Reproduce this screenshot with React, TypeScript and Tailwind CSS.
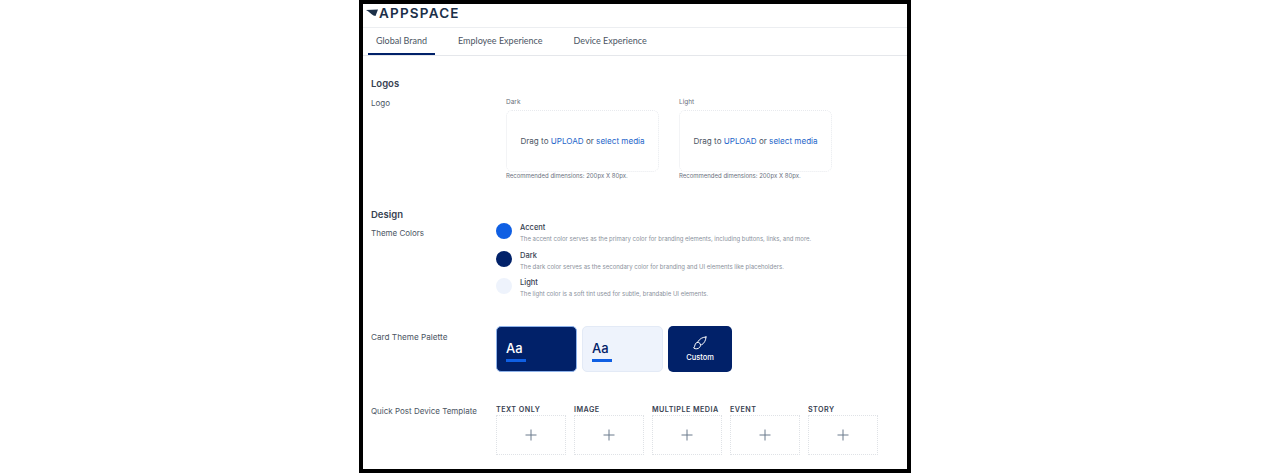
import React from 'react'

const uploadBoxes = ['Dark', 'Light']
const colors = [
  { name: 'Accent', swatch: 'bg-[#0f5fe3]', text: 'The accent color serves as the primary color for branding elements, including buttons, links, and more.' },
  { name: 'Dark', swatch: 'bg-[#012169]', text: 'The dark color serves as the secondary color for branding and UI elements like placeholders.' },
  { name: 'Light', swatch: 'bg-[#eef3fc]', text: 'The light color is a soft tint used for subtle, brandable UI elements.' },
]
const templates = ['TEXT ONLY', 'IMAGE', 'MULTIPLE MEDIA', 'EVENT', 'STORY']

function UploadBox({ label }: { label: string }) {
  return (
    <div className="w-[153px]">
      <p className="h-[15px] text-[6.5px] leading-[14px] text-[#6b7280]">{label}</p>
      <div className="flex h-[62px] items-center justify-center rounded-md border border-dotted border-[#e8eaee] text-[8.1px] text-[#4b5563]">
        <span>
          Drag to <span className="text-[#2465c9]">UPLOAD</span> or <span className="text-[#2465c9]">select media</span>
        </span>
      </div>
      <p className="text-[6px] leading-[8px] text-[#6b7280]">Recommended dimensions: 200px X 80px.</p>
    </div>
  )
}

export default function App() {
  return (
    <div className="h-[473px] w-[1270px] bg-white font-['Inter',sans-serif]">
      <div className="ml-[359px] h-[473px] w-[552px] overflow-hidden border-4 border-black bg-white">
        <div className="flex h-[24px] items-start border-b border-[#eceef1] pl-[3px] pt-[2px]">
          <svg width="13" height="8" viewBox="0 0 13 8" className="mt-[3px] shrink-0">
            <path d="M0 1 L12 0.500 L9.500 7 L7.500 6.500 C5 5 3 2.500 0 1 Z" fill="#1b2f48" />
          </svg>
          <span className="text-[13.5px] font-semibold leading-[14px] tracking-[1.2px] text-[#1b2f48]">APPSPACE</span>
        </div>

        <div className="flex h-[28px] border-b border-[#e5e7eb] pl-[5px] font-['Lato',sans-serif] text-[9px] text-[#4b5563]">
          <div className="flex h-[27px] w-[67px] items-center justify-center border-b-2 border-[#012169]">Global Brand</div>
          <div className="ml-[23px] flex h-[26px] items-center">Employee Experience</div>
          <div className="ml-[31px] flex h-[26px] items-center">Device Experience</div>
        </div>

        <div className="pl-[8px]">
          <h2 className="mt-[21px] text-[9.5px] font-semibold leading-[14px] text-[#374151]">Logos</h2>
          <div className="mt-[4px] flex">
            <p className="mt-[2px] w-[135px] text-[8px] leading-[12px] text-[#4b5563]">Logo</p>
            <div className="flex gap-[20px]">
              {uploadBoxes.map((label) => (
                <UploadBox key={label} label={label} />
              ))}
            </div>
          </div>

          <h2 className="mt-[28px] text-[9.5px] font-semibold leading-[14px] text-[#374151]">Design</h2>
          <div className="flex">
            <p className="mt-[5px] w-[125px] text-[8px] leading-[12px] text-[#4b5563]">Theme Colors</p>
            <div className="flex flex-col gap-[6.5px]">
              {colors.map((c) => (
                <div key={c.name} className="flex h-[21px] items-start gap-[8px]">
                  <div className={`mt-[1px] h-[16px] w-[16px] rounded-full ${c.swatch}`} />
                  <div>
                    <p className="text-[7.5px] font-medium leading-[11px] text-[#374151]">{c.name}</p>
                    <p className="mt-[1px] text-[6px] leading-[9px] text-[#8a919c]">{c.text}</p>
                  </div>
                </div>
              ))}
            </div>
          </div>

          <div className="mt-[28px] flex">
            <p className="mt-[5px] w-[125px] text-[8.2px] leading-[12px] text-[#4b5563]">Card Theme Palette</p>
            <div className="flex gap-[5px]">
              <div className="h-[46px] w-[81px] rounded-[5px] border border-[#8fb3ea] bg-[#012169] pl-[9px] pt-[13px]">
                <p className="text-[13px] font-medium leading-[16px] text-white">Aa</p>
                <div className="mt-[3px] h-[3px] w-[20px] bg-[#0f5fe3]" />
              </div>
              <div className="h-[46px] w-[81px] rounded-[5px] border border-[#e3eaf6] bg-[#eef3fc] pl-[9px] pt-[13px]">
                <p className="text-[13px] font-medium leading-[16px] text-[#012169]">Aa</p>
                <div className="mt-[3px] h-[3px] w-[20px] bg-[#0f5fe3]" />
              </div>
              <div className="flex h-[46px] w-[64px] flex-col items-center rounded-[5px] bg-[#012169] pt-[9px] text-white">
                <svg width="16" height="16" viewBox="0 0 24 24" fill="none" stroke="currentColor" strokeWidth="1.5" strokeLinecap="round" strokeLinejoin="round">
                  <path d="M21 3C16 3 11 6 9 10L14 15C18 13 21 8 21 3Z" />
                  <path d="M9 11C6 11 5 13 4.500 15C4 17 3.500 18.500 2.500 19.500C5 21.500 9.500 21 11.500 18.500C13 16.500 13 15 12.500 14" />
                </svg>
                <p className="mt-[2px] text-[7.5px] font-medium leading-[10px]">Custom</p>
              </div>
            </div>
          </div>

          <div className="mt-[32px] flex">
            <p className="mt-[1px] w-[125px] text-[8px] leading-[12px] text-[#4b5563]">Quick Post Device Template</p>
            <div className="flex gap-[8px]">
              {templates.map((t) => (
                <div key={t} className="w-[70px]">
                  <p className="whitespace-nowrap text-[7.2px] font-semibold leading-[11px] tracking-[0.45px] text-[#374151]">{t}</p>
                  <div className="flex h-[40px] items-center justify-center border border-dotted border-[#dfe2e6]">
                    <svg width="12" height="12" viewBox="0 0 12 12" stroke="#6b7a8c" strokeWidth="1">
                      <path d="M6 0.500V11.500M0.500 6H11.500" />
                    </svg>
                  </div>
                </div>
              ))}
            </div>
          </div>
        </div>
      </div>
    </div>
  )
}
